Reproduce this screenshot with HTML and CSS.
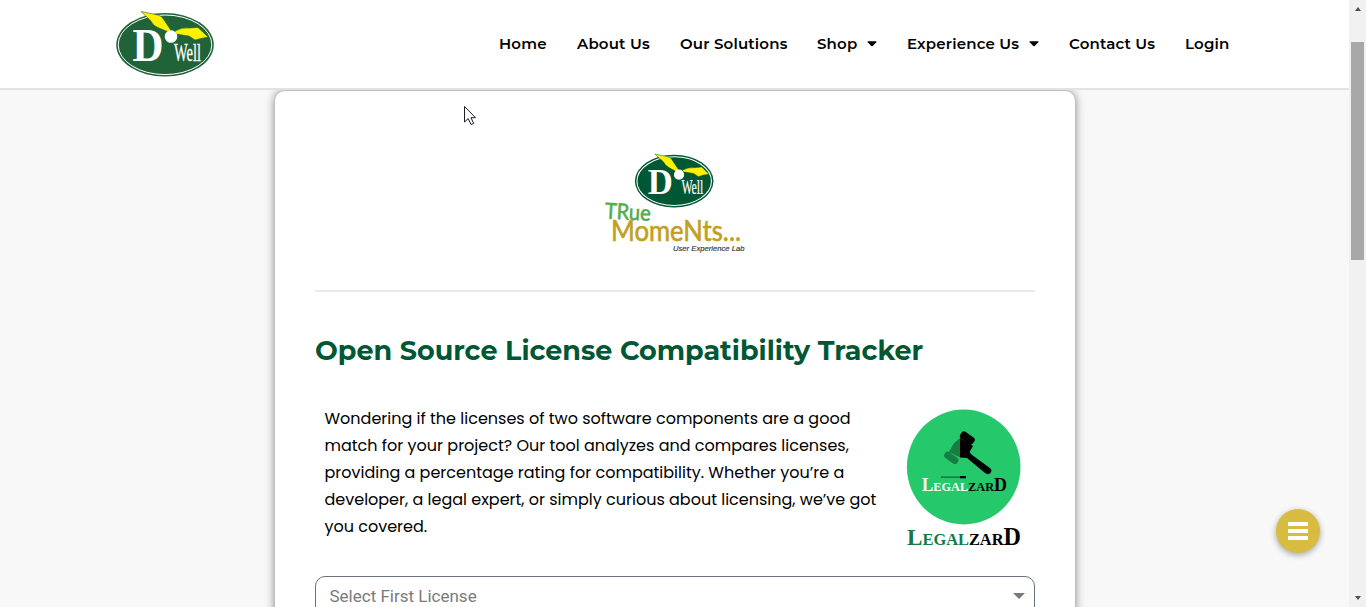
FILE: index.html
```html
<!DOCTYPE html>
<html lang="en">
<head>
<meta charset="utf-8">
<title>Open Source License Compatibility Tracker</title>
<link rel="stylesheet" href="styles.css">
</head>
<body>
<div class="page">
  <header class="header">
    <svg class="brand" viewBox="0 0 98 68" width="98" height="68" role="img" aria-label="DoWell">
      <ellipse cx="49" cy="34.800" rx="48.800" ry="31.800" fill="#216339"/>
      <ellipse cx="49" cy="34.800" rx="46.800" ry="29.800" fill="none" stroke="#fff" stroke-width="1"/>
      <path d="M25 1.500 42 5Q46 6 48 10L55 20.500 52.500 22 43 18Q37 16 35 11Z" fill="#fff200" stroke="#216339" stroke-width=".6"/>
      <path d="M59 21Q67 17 73 18L82 17.500 92 27 85 28.500 79 30 73 26 60 24Z" fill="#fff200" stroke="#216339" stroke-width=".6"/>
      <text class="logo-d" x="16.500" y="51" font-size="46" textLength="31" lengthAdjust="spacingAndGlyphs">D</text>
      <text class="logo-well" x="58" y="50.500" font-size="25" textLength="27" lengthAdjust="spacingAndGlyphs">Well</text>
      <circle cx="55" cy="26.500" r="6.300" fill="#fff"/>
    </svg>
    <nav class="nav">
      <a class="home">Home</a>
      <a class="about">About Us</a>
      <a class="solutions">Our Solutions</a>
      <a class="shop"><span>Shop</span><svg class="caret" viewBox="0 0 10 6" width="10" height="6"><path d="M1 .3H9Q10 .5 9.300 1.300L5.700 5Q5 5.600 4.300 5L.7 1.300Q0 .5 1 .3Z"/></svg></a>
      <a class="experience"><span>Experience Us</span><svg class="caret" viewBox="0 0 10 6" width="10" height="6"><path d="M1 .3H9Q10 .5 9.300 1.300L5.700 5Q5 5.600 4.300 5L.7 1.300Q0 .5 1 .3Z"/></svg></a>
      <a class="contact">Contact Us</a>
      <a class="login">Login</a>
    </nav>
  </header>
  <main class="main">
    <section class="card">
      <div class="lab">
        <svg class="lab-logo" viewBox="0 0 144 102" width="144" height="102" role="img" aria-label="DoWell True Moments User Experience Lab">
          <g transform="translate(31.500 2) scale(.81)">
            <ellipse cx="49" cy="33.500" rx="48.500" ry="32.500" fill="#005734"/>
            <ellipse cx="49" cy="33.500" rx="46" ry="30" fill="none" stroke="#fff" stroke-width="1.300"/>
            <path d="M25 0 42 3.500Q46 5 48 10L55 20 52 22 43 17Q38 15 36 10Z" fill="#fff200" stroke="#005734" stroke-width=".6"/>
            <path d="M59 20Q67 16 73 17L83 16 92 25 85 26 79 28 73 24 60 22Z" fill="#fff200" stroke="#005734" stroke-width=".6"/>
            <text class="logo-d" x="16.500" y="49.500" font-size="45" textLength="31" lengthAdjust="spacingAndGlyphs">D</text>
            <text class="logo-well" x="58" y="49" font-size="25" textLength="27" lengthAdjust="spacingAndGlyphs">Well</text>
            <circle cx="55" cy="25.500" r="6.300" fill="#fff"/>
          </g>
          <g class="script">
            <text class="true" x="1.500" y="66.500" font-size="22" textLength="46" lengthAdjust="spacingAndGlyphs" transform="rotate(3 2 66)">TRue</text>
            <text class="moments" x="8" y="89" textLength="130" lengthAdjust="spacingAndGlyphs" font-size="28">MomeNts...</text>
          </g>
          <text class="lab-name" x="70" y="99" font-size="7.500" textLength="71.500" lengthAdjust="spacingAndGlyphs">User Experience Lab</text>
        </svg>
      </div>
      <h1 class="title">Open Source License Compatibility Tracker</h1>
      <div class="intro">
        <p class="copy">Wondering if the licenses of two software components are a good match for your project? Our tool analyzes and compares licenses, providing a percentage rating for compatibility. Whether you’re a developer, a legal expert, or simply curious about licensing, we’ve got you covered.</p>
        <svg class="legal" viewBox="0 0 116 142" width="116" height="142" role="img" aria-label="Legalzard">
          <ellipse cx="56.700" cy="58" rx="56.800" ry="57.500" fill="#25c96b"/>
          <g transform="translate(-12 -9)">
            <path d="M65 38 59 43 54 52 65 57.500Z" fill="#187d43"/>
            <rect x="48.500" y="54.500" width="15.500" height="7" rx="3" transform="rotate(36 56.500 58)" fill="#187d43"/>
            <path d="M65 38 78 46 74.500 52 76.500 54.500 95.500 68.500Q97.500 71 95 73.500 92.500 75 90 73L72 58 65 57.500Z"/>
            <rect x="64.500" y="33.800" width="15.500" height="8" rx="3" transform="rotate(36 72 38)"/>
            <path d="M46 76.300H66v1.700H46Z" fill="#187d43"/><path d="M65 76h6v2.300h-6Z"/>
          </g>
          <g class="serif">
            <text x="15" y="82" font-size="13" textLength="85" lengthAdjust="spacingAndGlyphs"><tspan font-size="18" fill="#fff">L</tspan><tspan fill="#fff">EGAL</tspan><tspan>ZAR</tspan><tspan font-size="19">D</tspan></text>
            <text x="0" y="136" font-size="17" textLength="114" lengthAdjust="spacingAndGlyphs"><tspan font-size="24" fill="#137a41">L</tspan><tspan fill="#137a41">EGAL</tspan><tspan>ZAR</tspan><tspan font-size="25">D</tspan></text>
          </g>
        </svg>
      </div>
      <div class="select"><span>Select First License</span><i class="arrow"></i></div>
    </section>
  </main>
</div>
<div class="scrollbar"><i class="up"></i><div class="thumb"></div><i class="down"></i></div>
<div class="fab"><i></i><i></i><i></i></div>
<svg class="cursor" viewBox="0 0 13 20" width="13" height="20"><path d="M.5.500V16L4.200 12.600 7 18.500 9.700 17.400 7 11.700H11.500Z" fill="#fff" stroke="#1c1c24"/></svg>
</body>
</html>
```
FILE: styles.css
```css
* { box-sizing: border-box; }
body {
  margin: 0;
  height: 607px;
  overflow: hidden;
  display: flex;
  background: #f8f8f8;
  font-family: Montserrat, Inter, sans-serif;
  color: #000;
}
.page { width: 1349px; height: 607px; overflow: hidden; }
.header {
  position: relative;
  z-index: 1;
  height: 90px;
  padding: 10px 0 0 116px;
  display: flex;
  background: #fff;
  border-bottom: 2px solid #e3e3e3;
}
.brand { display: block; flex: none; overflow: visible; }
.nav {
  display: flex;
  gap: 30px;
  height: 66px;
  align-items: center;
  margin-left: 285px;
  font-size: 15px;
  font-weight: 600;
  letter-spacing: .17px;
  white-space: nowrap;
}
.nav a { display: flex; align-items: center; justify-content: space-between; }
.home { width: 48px; }
.about { width: 73px; }
.solutions { width: 107px; }
.shop { width: 60px; }
.experience { width: 132px; }
.contact { width: 86px; }
.login { width: 45px; }
.caret { display: block; margin-top: 1px; }
.logo-d { font-family: "Liberation Serif", serif; font-weight: 700; fill: #fff; }
.logo-well { font-family: "Liberation Serif", serif; fill: #fff; stroke: #fff; stroke-width: .3px; }
.main { padding: 1px 0 0 275px; }
.card {
  width: 800px;
  height: 640px;
  padding: 0 40px;
  background: #fff;
  border-radius: 10px;
  box-shadow: 0 0 10px rgba(0, 0, 0, .5);
}
.lab {
  height: 201px;
  padding: 61px 0 0 288px;
  border-bottom: 2px solid #e9e9e9;
}
.lab-logo { display: block; overflow: visible; }
.script { font-family: Lato, sans-serif; stroke-width: .6px; stroke-linejoin: round; }
.true { fill: #52ad4b; stroke: #52ad4b; }
.moments { fill: #c1a01e; stroke: #c1a01e; }
.lab-name { font-family: "Liberation Sans", sans-serif; font-style: italic; fill: #333; stroke: #333; stroke-width: .15px; }
.title {
  margin: 42px 0 0;
  font-size: 27px;
  line-height: 34px;
  font-weight: 700;
  color: #005734;
  white-space: nowrap;
}
.intro { display: flex; height: 208px; padding: 37px 0 0 9.5px; }
.copy {
  width: 560px;
  margin: 0 22px 0 0;
  flex: none;
  font-family: Poppins, Inter, sans-serif;
  font-size: 16px;
  line-height: 27px;
}
.legal { display: block; margin-top: 4px; overflow: visible; }
.serif { font-family: "Liberation Serif", serif; font-weight: 700; }
.select {
  display: flex;
  justify-content: space-between;
  height: 56px;
  padding: 9px 9px 0 13.5px;
  border: 1px solid #69727d;
  border-radius: 10px;
  font: 17px/20px Roboto, sans-serif;
  color: #7a7a7a;
}
.arrow {
  height: 0;
  margin-top: 7px;
  border: 6px solid transparent;
  border-top: 6px solid #7a7a7a;
  border-bottom: 0;
}
.scrollbar {
  width: 17px;
  height: 607px;
  display: flex;
  flex-direction: column;
  align-items: center;
  background: #f1f1f1;
}
.up { margin: 7px 0 31px; border: 3.5px solid transparent; border-bottom: 4px solid #505050; border-top: 0; }
.thumb { width: 13px; height: 218px; background: #a8a8a8; }
.down { margin-top: 336px; border: 3.5px solid transparent; border-top: 4px solid #505050; border-bottom: 0; }
.fab {
  position: absolute;
  left: 1276px;
  top: 509px;
  width: 44px;
  height: 44px;
  border-radius: 50%;
  background: #d8bc42;
  box-shadow: 0 2px 6px rgba(0, 0, 0, .35);
  display: flex;
  flex-direction: column;
  align-items: center;
  justify-content: center;
  gap: 3px;
}
.fab i { width: 20px; height: 4px; background: #fff; }
.cursor { position: absolute; left: 464px; top: 106px; z-index: 2; }
```
